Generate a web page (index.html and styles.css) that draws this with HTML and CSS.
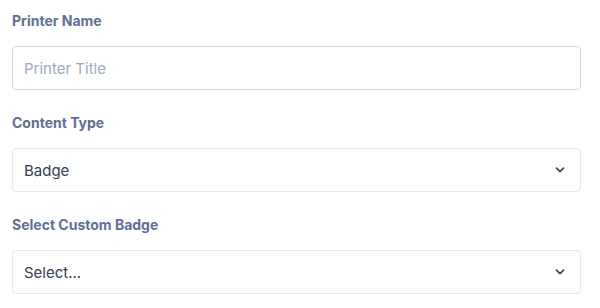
FILE: index.html
```html
<html lang="en">
<head>
    <meta charset="UTF-8">
    <meta name="viewport" content="width=device-width, initial-scale=1.0">
    <title>Printer Settings</title>
    <link rel="stylesheet" href="styles.css">
</head>
<body>
    <div class="form">
        <div class="field">
            <label class="field-label" for="printerName">Printer Name</label>
            <input type="text" class="text-input" id="printerName" placeholder="Printer Title">
        </div>

        <div class="field">
            <div class="field-label">Content Type</div>
            <div class="select-box">
                <span class="select-value">Badge</span>
                <svg class="chevron" width="10" height="6" viewBox="0 0 10 6">
                    <path d="M1.5 1.2 L5 4.6 L8.5 1.2" fill="none" stroke="#3d4a68" stroke-width="1.8" stroke-linecap="round" stroke-linejoin="round"/>
                </svg>
            </div>
        </div>

        <div class="field">
            <div class="field-label">Select Custom Badge</div>
            <div class="select-box">
                <span class="select-value">Select...</span>
                <svg class="chevron" width="10" height="6" viewBox="0 0 10 6">
                    <path d="M1.5 1.2 L5 4.6 L8.5 1.2" fill="none" stroke="#3d4a68" stroke-width="1.8" stroke-linecap="round" stroke-linejoin="round"/>
                </svg>
            </div>
        </div>
    </div>
</body>
</html>
```

FILE: styles.css
```css
* {
    margin: 0;
    padding: 0;
    box-sizing: border-box;
    font-family: 'Inter', sans-serif;
}

body {
    background: #ffffff;
    padding: 11px 19px 0 12px;
}

.field {
    margin-bottom: 23px;
}

.field-label {
    display: block;
    font-size: 14px;
    line-height: 20px;
    font-weight: 700;
    color: #5f6f94;
    margin-bottom: 15px;
}

.text-input,
.select-box {
    width: 100%;
    height: 44px;
    border-radius: 4px;
    background: #fff;
    font-size: 15px;
    color: #344054;
}

.text-input {
    border: 1px solid #d3d8e8;
    padding: 0 11px;
    outline: none;
}

.text-input::placeholder {
    color: #a1a9bf;
}

.select-box {
    display: flex;
    align-items: center;
    justify-content: space-between;
    border: 1px solid #e8e9ee;
    padding: 0 15px 0 11px;
}

.chevron {
    display: block;
}
```
